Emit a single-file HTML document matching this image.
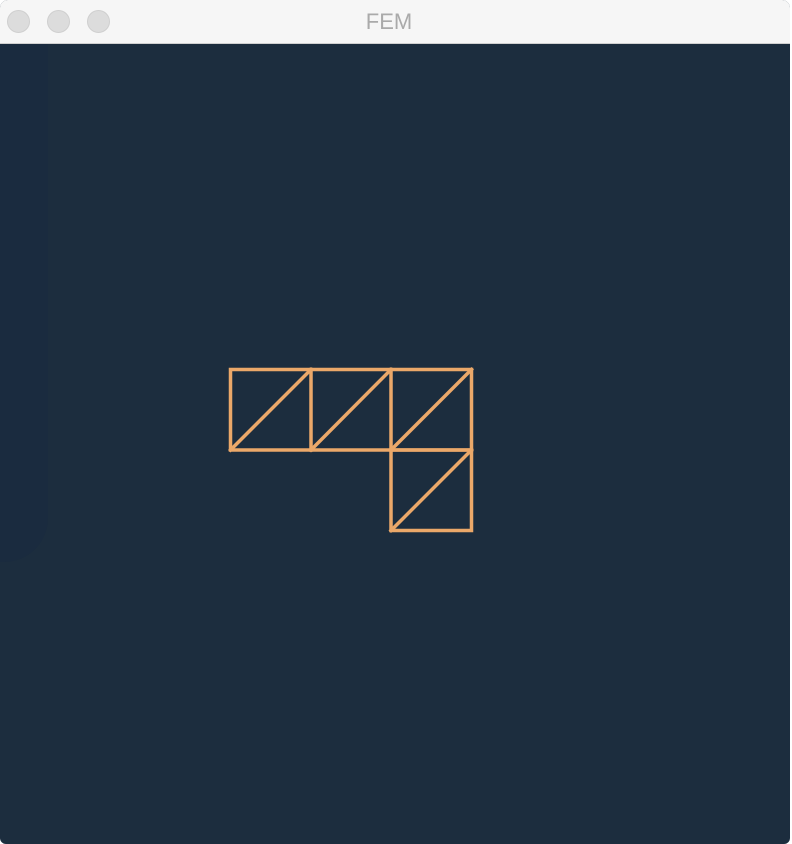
<!DOCTYPE html>
<html><head><meta charset="utf-8"><style>
html,body{margin:0;padding:0;background:#fff;}
body{width:792px;height:844px;position:relative;overflow:hidden;font-family:"Liberation Sans",sans-serif;}
.win{position:absolute;left:0;top:0;width:790px;height:844px;background:#1c2d3e;border-radius:8px 8px 6px 6px;overflow:hidden;}
.bar{position:absolute;left:0;top:0;width:790px;height:43px;background:#f6f6f6;border-bottom:1px solid #d0d0d0;}
.btn{position:absolute;top:10px;width:23px;height:23px;border-radius:50%;background:#dcdcdc;border:1px solid #cfcfcf;box-sizing:border-box;}
.title{position:absolute;left:0;width:778px;top:9px;text-align:center;font-size:22px;color:#aaa;}
.panel{position:absolute;left:-40px;top:44px;width:88px;height:518px;background:#1a2b3f;border-radius:0 0 44px 0;}
</style></head><body>
<div class="win">
<div class="panel"></div>
<div class="bar">
<div class="btn" style="left:7px"></div>
<div class="btn" style="left:47px"></div>
<div class="btn" style="left:87px"></div>
<div class="title">FEM</div>
</div>
<svg width="792" height="844" style="position:absolute;left:0;top:0">
<g stroke="#eba869" stroke-width="3.5" fill="none" stroke-linecap="square">
<rect x="230.5" y="369.5" width="241" height="80.5"/>
<rect x="391" y="450" width="80.5" height="80.5"/>
<line x1="311" y1="369.5" x2="311" y2="450"/>
<line x1="391" y1="369.5" x2="391" y2="450"/>
<line x1="230.5" y1="450" x2="311" y2="369.5"/>
<line x1="311" y1="450" x2="391" y2="369.5"/>
<line x1="391" y1="450" x2="471.5" y2="369.5"/>
<line x1="391" y1="530.5" x2="471.5" y2="450"/>
</g>
</svg>
</div>
</body></html>
